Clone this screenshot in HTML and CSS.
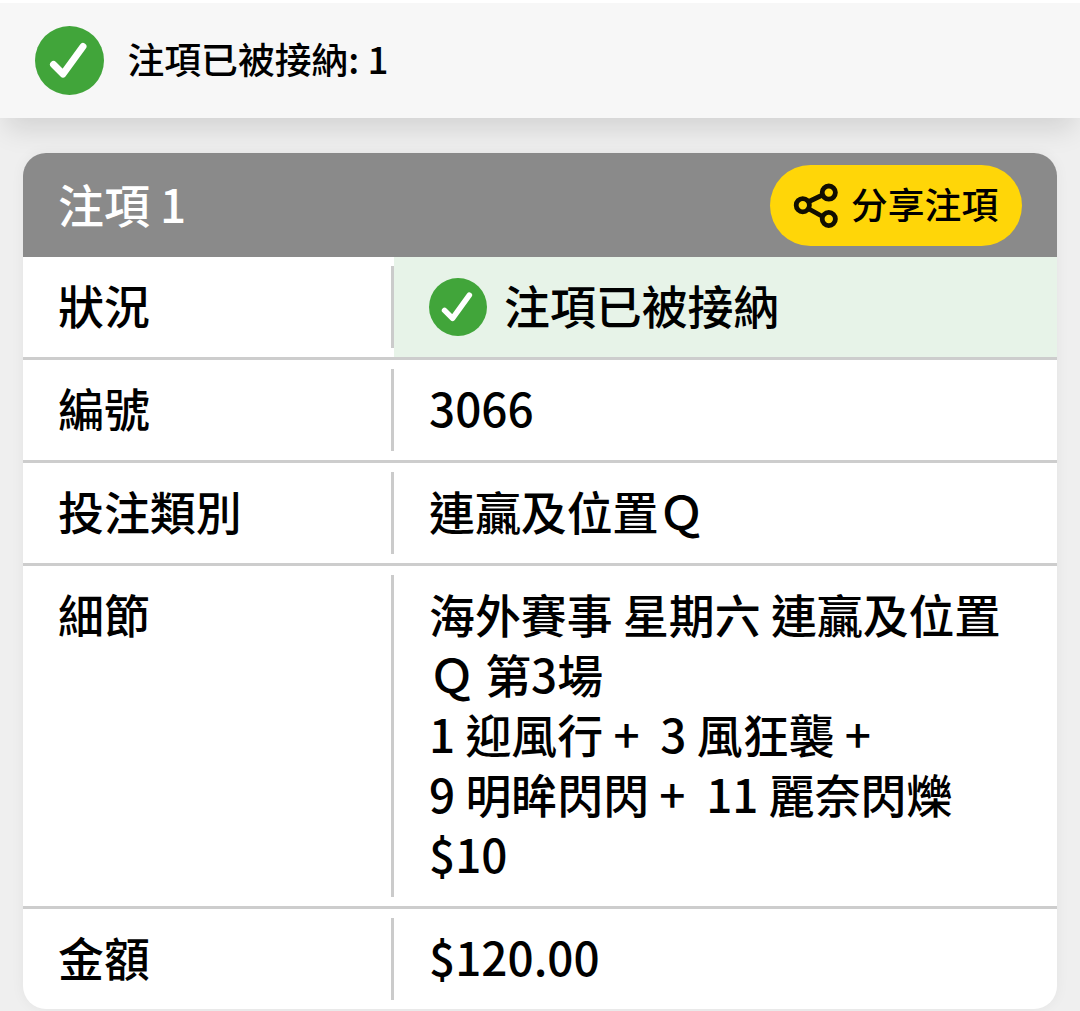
FILE: index.html
```html
<!DOCTYPE html>
<html lang="zh-HK">
<head>
  <meta charset="UTF-8" />
  <title>注項 1</title>
  <link rel="stylesheet" href="styles.css">
</head>
<body>
  <div class="banner">
    <svg class="tick" viewBox="0 0 69 69">
      <circle cx="34.5" cy="34.5" r="34.5" fill="#41a53a" />
      <path d="M18.5 38.5 L28 48 L48 20.5" fill="none" stroke="#fff" stroke-width="7" stroke-linecap="round" stroke-linejoin="round" />
    </svg>
    <span>注項已被接納: 1</span>
  </div>

  <div class="card">
    <div class="card-header">
      <h2>注項 1</h2>
      <button class="share">
        <svg viewBox="0 0 46 46">
          <g fill="none" stroke="#120e00" stroke-width="4.8">
            <path d="M16 19.5 L29.5 13 M16 27 L29.5 34.5" />
            <circle cx="9.8" cy="23.2" r="6.6" />
            <circle cx="35.8" cy="10.6" r="6.6" />
            <circle cx="35.8" cy="37" r="6.6" />
          </g>
        </svg>
        <span>分享注項</span>
      </button>
    </div>

    <div class="row">
      <div class="label">狀況</div>
      <div class="value accepted">
        <svg class="tick" viewBox="0 0 69 69">
          <circle cx="34.5" cy="34.5" r="34.5" fill="#41a53a" />
          <path d="M18.5 38.5 L28 48 L48 20.5" fill="none" stroke="#fff" stroke-width="6.6" stroke-linecap="round" stroke-linejoin="round" />
        </svg>
        <span>注項已被接納</span>
      </div>
    </div>
    <div class="row">
      <div class="label">編號</div>
      <div class="value">3066</div>
    </div>
    <div class="row">
      <div class="label">投注類別</div>
      <div class="value">連贏及位置Ｑ</div>
    </div>
    <div class="row">
      <div class="label">細節</div>
      <div class="value">海外賽事 星期六 連贏及位置<br>Ｑ 第3場<br>1 迎風行 +&nbsp; 3 風狂襲 +<br>9 明眸閃閃 +&nbsp; 11 麗奈閃爍<br>$10</div>
    </div>
    <div class="row">
      <div class="label">金額</div>
      <div class="value">$120.00</div>
    </div>
  </div>
</body>
</html>
```
FILE: styles.css
```css
* {
  box-sizing: border-box;
}
body {
  margin: 0;
  height: 1011px;
  overflow: hidden;
  background-color: #efefef;
  color: #000;
  font-family: "Noto Sans CJK TC", "Noto Sans", sans-serif;
  font-weight: 500;
}
.banner {
  position: relative;
  display: flex;
  align-items: center;
  gap: 23.5px;
  height: 118px;
  padding: 0 35px;
  border-top: 3px solid #fff;
  background-color: #f7f7f7;
  box-shadow: 0 17px 26px -6px rgba(0, 0, 0, 0.12);
  font-size: 36.8px;
}
.banner span {
  padding-bottom: 5px;
}
.banner .tick {
  width: 69px;
  height: 69px;
}
.card {
  margin: 35px 23px 0;
  border-radius: 23px;
  overflow: hidden;
  background-color: #fff;
  box-shadow: 0 0 14px rgba(0, 0, 0, 0.05);
}
.card-header {
  display: flex;
  align-items: center;
  justify-content: space-between;
  height: 104px;
  padding: 0 35px;
  background-color: #8a8a8a;
}
.card-header h2 {
  margin: 0;
  padding-bottom: 5px;
  color: #fff;
  font-size: 45.9px;
  font-weight: 500;
  line-height: 60px;
}
.share {
  display: flex;
  align-items: center;
  gap: 12px;
  width: 252px;
  height: 81px;
  padding: 0 0 0 23px;
  border: none;
  border-radius: 41px;
  background-color: #ffd608;
  color: #000;
  font-family: inherit;
  font-size: 36.8px;
  font-weight: 500;
  line-height: 60px;
}
.share span {
  padding-bottom: 4px;
}
.share svg {
  width: 46px;
  height: 46px;
}
.row {
  display: flex;
  border-bottom: 3px solid #cdcdcd;
  font-size: 45.9px;
  line-height: 60px;
}
.row:last-child {
  border-bottom: none;
}
.label {
  width: 371px;
  padding: 17px 0 23px 35px;
  /* short divider that stops before the row borders */
  background: linear-gradient(#cbcbcb, #cbcbcb) no-repeat right center / 3px calc(100% - 18px);
}
.value {
  flex: 1;
  padding: 17px 0 23px 35px;
  white-space: nowrap;
}
.accepted {
  display: flex;
  align-items: center;
  gap: 17px;
  padding: 20px 0 20px 35px;
  background-color: #e7f3e8;
}
.accepted span {
  margin: -3px 0 3px;
}
.accepted .tick {
  width: 58px;
  height: 58px;
}
```
